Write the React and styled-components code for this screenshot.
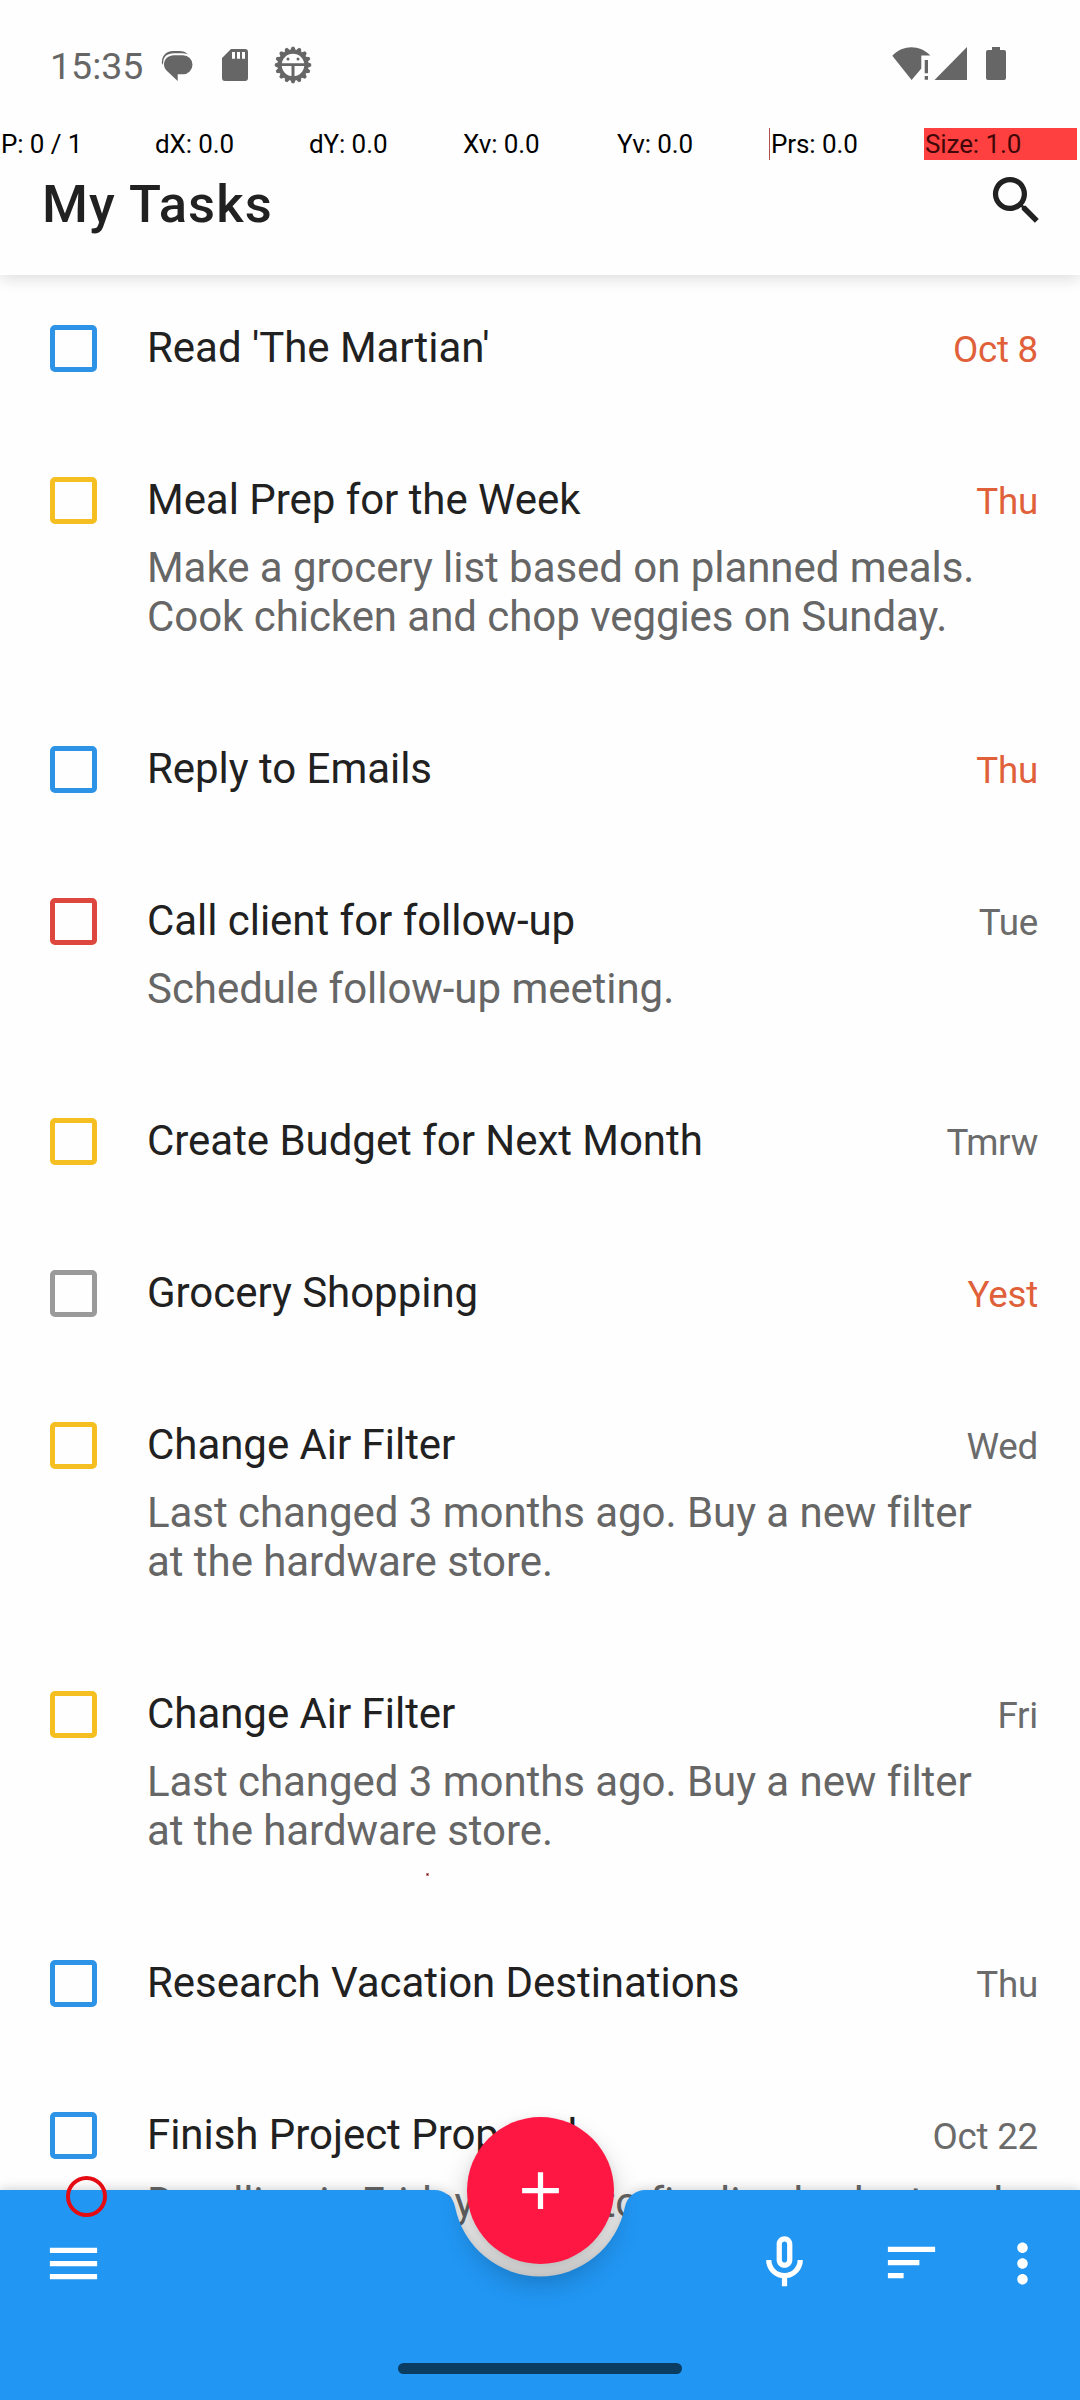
import React from "react";
import styled, { createGlobalStyle } from "styled-components";

const Global = createGlobalStyle`
  * { box-sizing: border-box; }
  html, body { margin: 0; padding: 0; background: #fefefe; }
  body { font-family: Roboto, "Noto Sans", sans-serif; }
`;

const Screen = styled.div`
  position: relative;
  display: flex;
  flex-direction: column;
  width: 1080px;
  height: 2400px;
  overflow: hidden;
  background: #fefefe;
`;

const Header = styled.header`
  flex: none;
  display: flex;
  flex-direction: column;
  height: 275px;
  background: #fefefe;
  box-shadow: 0 4px 14px rgba(0, 0, 0, 0.13);
  z-index: 1;
`;

const StatusBar = styled.div`
  flex: none;
  display: flex;
  align-items: center;
  justify-content: space-between;
  height: 128px;
  padding: 2px 0 0;
`;

const StatusGroup = styled.div`
  display: flex;
  align-items: center;
`;

const Clock = styled.span`
  margin: 2px 0 0 50px;
  width: 110px;
  font-size: 37.5px;
  line-height: 46px;
  color: #666;
`;

const StatusIcon = styled.svg`
  display: block;
  flex: none;
  fill: #666;
`;

const DebugRow = styled.div`
  flex: none;
  display: grid;
  grid-template-columns: repeat(7, 153px);
  column-gap: 1px;
  height: 32px;
`;

const DebugCell = styled.span`
  margin-left: ${(p) => (p.$marker ? -1 : 0)}px;
  padding-left: 1px;
  border-left: ${(p) => (p.$marker ? "1px solid #b05050" : "none")};
  background: ${(p) => (p.$alert ? "#ff4040" : "transparent")};
  color: ${(p) => (p.$alert ? "#400808" : "#000")};
  font-size: 26px;
  letter-spacing: -0.1px;
  line-height: 32px;
  white-space: nowrap;
`;

const TitleBar = styled.div`
  display: flex;
  justify-content: space-between;
  padding: 9px 32px 0 42px;
`;

const PageTitle = styled.h1`
  margin: 4px 0 0;
  font-size: 52.5px;
  line-height: 62px;
  font-weight: 500;
  letter-spacing: 1.15px;
  color: #212121;
`;

const Icon = styled.svg`
  display: block;
  width: 63px;
  height: 63px;
  fill: ${(p) => p.$color || "#fff"};
`;

const List = styled.main`
  flex: 1;
  min-height: 0;
  padding-top: 50px;
  overflow: hidden;
`;

const Row = styled.article`
  display: grid;
  grid-template-columns: 97px 1fr auto;
  column-gap: 50px;
  padding-right: 42px;
  height: ${(p) => 152 + (p.$lines ? 19 + p.$lines * 49 : 0)}px;
`;

const Checkbox = styled.span`
  justify-self: end;
  width: 47px;
  height: 47px;
  border: 5px solid ${(p) => p.$color};
  border-radius: 5px;
`;

const Body = styled.div`
  min-width: 0;
  margin-top: -2px;
`;

const TaskTitle = styled.h2`
  margin: 0;
  font-size: 42px;
  line-height: 50px;
  font-weight: 400;
  letter-spacing: -0.04px;
  color: #212121;
  white-space: nowrap;
`;

const Note = styled.p`
  margin: 18px -80px 0 0;
  font-size: 42px;
  line-height: 49px;
  letter-spacing: -0.05px;
  color: #666;
  white-space: pre;
`;

const Due = styled.span`
  padding-top: 3px;
  font-size: 36.75px;
  letter-spacing: -0.25px;
  line-height: 44px;
  color: ${(p) => (p.$late ? "#e0603a" : "#6b6b6b")};
`;

const BottomBar = styled.nav`
  position: absolute;
  left: 0;
  bottom: 0;
  width: 1080px;
  height: 210px;
  filter: drop-shadow(0 0 6px rgba(0, 0, 0, 0.22));
`;

const BarSurface = styled.div`
  display: flex;
  flex-direction: column;
  justify-content: space-between;
  height: 210px;
  padding-bottom: 26px;
  background: #2196f3;
  clip-path: path("M0 0H434.5A21 21 0 0 1 455.1 16.9A86.6 86.6 0 0 0 624.9 16.9A21 21 0 0 1 645.5 0H1080V210H0Z");
`;

const Actions = styled.div`
  display: flex;
  align-items: flex-start;
  padding: 41px 26px 0 42px;
`;

const ActionGroup = styled.div`
  display: flex;
  margin-left: auto;
`;

const ActionIcon = styled(Icon)`
  margin-left: ${(p) => p.$gap || 0}px;
  margin-top: ${(p) => p.$drop || 0}px;
`;

const Handle = styled.div`
  align-self: center;
  width: 284px;
  height: 11px;
  border-radius: 6px;
  background: #0b3d63;
`;

const FabAnchor = styled.div`
  position: absolute;
  left: 466.5px;
  top: 2116.5px;
`;

const Fab = styled.button`
  display: flex;
  align-items: center;
  justify-content: center;
  width: 147px;
  height: 147px;
  padding: 0;
  border: 0;
  border-radius: 50%;
  background: #ff1744;
  box-shadow: 0 17px 28px rgba(0, 0, 0, 0.24), 0 1px 8px rgba(0, 0, 0, 0.06);
`;

const TouchRing = styled.div`
  position: absolute;
  left: 66px;
  top: 2176px;
  width: 41px;
  height: 41px;
  border: 4px solid #e50b12;
  border-radius: 50%;
`;

const TouchDot = styled.div`
  position: absolute;
  left: 426px;
  top: 1873px;
  width: 3px;
  height: 3px;
  border: 1px solid #c98080;
  background: #4a1010;
`;

const BLUE = "#2d93e6";
const YELLOW = "#f5bf22";
const RED = "#dd473d";
const GREY = "#9a9a9a";

const tasks = [
  { title: "Read 'The Martian'", color: BLUE, due: "Oct 8", late: true },
  {
    title: "Meal Prep for the Week",
    color: YELLOW,
    due: "Thu",
    late: true,
    note: ["Make a grocery list based on planned meals.", "Cook chicken and chop veggies on Sunday."],
  },
  { title: "Reply to Emails", color: BLUE, due: "Thu", late: true },
  { title: "Call client for follow-up", color: RED, due: "Tue", note: ["Schedule follow-up meeting."] },
  { title: "Create Budget for Next Month", color: YELLOW, due: "Tmrw" },
  { title: "Grocery Shopping", color: GREY, due: "Yest", late: true },
  {
    title: "Change Air Filter",
    color: YELLOW,
    due: "Wed",
    note: ["Last changed 3 months ago. Buy a new filter", "at the hardware store."],
  },
  {
    title: "Change Air Filter",
    color: YELLOW,
    due: "Fri",
    note: ["Last changed 3 months ago. Buy a new filter", "at the hardware store."],
  },
  { title: "Research Vacation Destinations", color: BLUE, due: "Thu" },
  {
    title: "Finish Project Proposal",
    color: BLUE,
    due: "Oct 22",
    note: ["Deadline is Friday. Need to finalize budget and"],
  },
];

const debug = [
  { text: "P: 0 / 1" },
  { text: "dX: 0.0" },
  { text: "dY: 0.0" },
  { text: "Xv: 0.0" },
  { text: "Yv: 0.0" },
  { text: "Prs: 0.0", marker: true },
  { text: "Size: 1.0", alert: true },
];

const gearTeeth = Array.from({ length: 16 }, (_, i) => i * 22.5);

export default function App() {
  return (
    <Screen>
      <Global />
      <Header>
        <StatusBar>
          <StatusGroup>
            <Clock>15:35</Clock>
            <StatusIcon width="160" height="48" viewBox="0 0 160 48">
              <path d="M2 24C1 15 6 10 13 10h6c4 0 7 1 9 3.500C26 12.500 23 12.300 20 12.300h-6C7 12.300 3 16 3.200 22z" />
              <path d="M14 14.300h9a9.500 9.500 0 0 1 0 19h-5.300V40L7 30C5 28 4 26 4 23.500C4 18 8.500 14.300 14 14.300z" />
              <path d="M71 8h14a3 3 0 0 1 3 3v26a3 3 0 0 1-3 3H65a3 3 0 0 1-3-3V17zM72 11v6.700h3v-6.700zM77 11v6.700h3v-6.700zM82 11v6.700h3v-6.700z" fillRule="evenodd" />
              <g transform="translate(133 24)">
                {gearTeeth.map((a) => (
                  <path key={a} d="M-3.200 -14L-1.200 -18.200H1.200L3.200 -14z" transform={`rotate(${a})`} />
                ))}
                <circle r="13.300" fill="none" stroke="#666" strokeWidth="4" />
                <path d="M-13 -1.700H13V1H1.500V13H-1.500V1H-13z" />
                <circle cx="-5" cy="-6" r="1.500" />
                <circle cx="5" cy="-6" r="1.500" />
              </g>
            </StatusIcon>
          </StatusGroup>
          <StatusGroup>
            <StatusIcon width="200" height="48" viewBox="0 0 200 48">
              <path d="M12.300 14.700C23 3.500 40 3.500 50.300 14.500H41.300V27.500L31.600 39z" />
              <path d="M44.700 19h3.300v13.300h-3.300zM44.700 35h3.300v3.800h-3.300z" />
              <path d="M87 6V39H54.500z" />
              <path d="M112 6h8v3h4a2 2 0 0 1 2 2v26a2 2 0 0 1-2 2h-16a2 2 0 0 1-2-2V11a2 2 0 0 1 2-2h4z" />
            </StatusIcon>
          </StatusGroup>
        </StatusBar>
        <DebugRow>
          {debug.map((d) => (
            <DebugCell key={d.text} $marker={d.marker} $alert={d.alert}>
              {d.text}
            </DebugCell>
          ))}
        </DebugRow>
        <TitleBar>
          <PageTitle>My Tasks</PageTitle>
          <Icon viewBox="0 0 24 24" $color="#212121">
            <path d="M15.500 14h-.79l-.28-.27A6.471 6.471 0 0 0 16 9.500 6.500 6.500 0 1 0 9.500 16c1.610 0 3.090-.59 4.230-1.570l.27.28v.79l5 4.990L20.490 19l-4.990-5zm-6 0C7.010 14 5 11.990 5 9.500S7.010 5 9.500 5 14 7.010 14 9.500 11.990 14 9.500 14z" />
          </Icon>
        </TitleBar>
      </Header>

      <List>
        {tasks.map((t, i) => (
          <Row key={i} $lines={t.note ? t.note.length : 0}>
            <Checkbox $color={t.color} />
            <Body>
              <TaskTitle>{t.title}</TaskTitle>
              {t.note && <Note>{t.note.join("\n")}</Note>}
            </Body>
            <Due $late={t.late}>{t.due}</Due>
          </Row>
        ))}
      </List>

      <BottomBar>
        <BarSurface>
          <Actions>
            <ActionIcon viewBox="0 0 24 24" $drop={1}>
              <path d="M3 18h18v-2H3v2zm0-5h18v-2H3v2zm0-7v2h18V6H3z" />
            </ActionIcon>
            <ActionGroup>
              <ActionIcon viewBox="0 0 24 24">
                <path d="M12 14c1.660 0 3-1.340 3-3V5c0-1.660-1.340-3-3-3S9 3.340 9 5v6c0 1.660 1.340 3 3 3zm-1-9c0-.55.45-1 1-1s1 .45 1 1v6c0 .55-.45 1-1 1s-1-.45-1-1V5zm6 6c0 2.760-2.240 5-5 5s-5-2.240-5-5H5c0 3.530 2.610 6.430 6 6.920V21h2v-3.080c3.390-.49 6-3.390 6-6.920h-2z" />
              </ActionIcon>
              <ActionIcon viewBox="0 0 24 24" $gap={64}>
                <path d="M3 18h6v-2H3v2zM3 6v2h18V6H3zm0 7h12v-2H3v2z" />
              </ActionIcon>
              <ActionIcon viewBox="0 0 24 24" $gap={48} $drop={1}>
                <path d="M12 8c1.100 0 2-.9 2-2s-.9-2-2-2-2 .9-2 2 .9 2 2 2zm0 2c-1.100 0-2 .9-2 2s.9 2 2 2 2-.9 2-2-.9-2-2-2zm0 6c-1.100 0-2 .9-2 2s.9 2 2 2 2-.9 2-2-.9-2-2-2z" />
              </ActionIcon>
            </ActionGroup>
          </Actions>
          <Handle />
        </BarSurface>
      </BottomBar>

      <FabAnchor>
        <Fab aria-label="Add">
          <Icon viewBox="0 0 24 24">
            <path d="M19 13h-6v6h-2v-6H5v-2h6V5h2v6h6v2z" />
          </Icon>
        </Fab>
      </FabAnchor>
      <TouchRing />
      <TouchDot />
    </Screen>
  );
}
